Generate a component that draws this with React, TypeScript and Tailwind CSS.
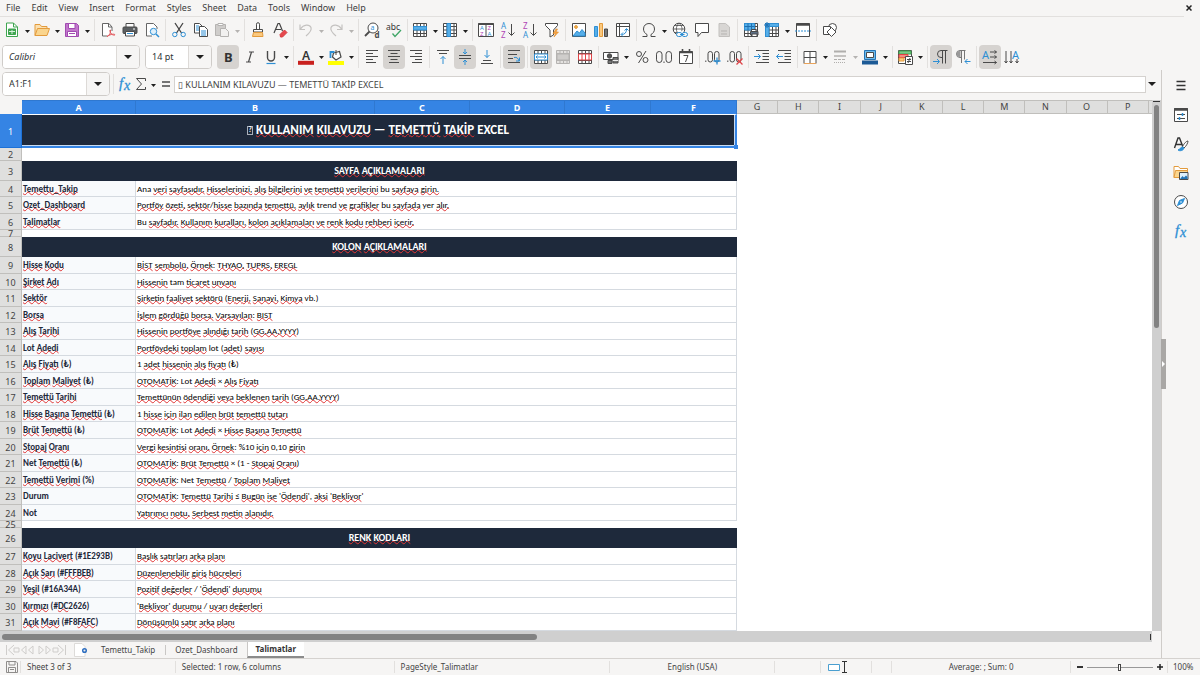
import { Fragment, type ReactNode } from "react";
import clsx from "clsx";

const BLUE = "#2e8fd4";
const INK = "#4a4a4a";

/* ---------- icons ---------- */

function Svg({ children, className }: { children: ReactNode; className?: string }) {
  return (
    <svg
      viewBox="0 0 16 16"
      className={clsx("h-4 w-4 shrink-0 overflow-visible", className)}
      fill="none"
      stroke={INK}
      aria-hidden="true"
    >
      {children}
    </svg>
  );
}

const SHEET_GRID = "M1.5 1.5h13v13h-13zM1.5 4.5h13M1.5 8h13M1.5 11.5h13M5 1.5v13M8.5 1.5v13M12 1.5v13";

const icons: Record<string, ReactNode> = {
  newDoc: (
    <Svg>
      <path d="M2.5 1h7l4 4v9.500h-11z" fill="#fff" stroke="#3fa650" />
      <path d="M9.500 1v4h4" stroke="#3fa650" />
      <path d="M4.500 7h7v5.500h-7z" fill="#3fa650" stroke="#3fa650" />
      <path d="M5 9.500h6M8 8v4" stroke="#d8f0dc" />
    </Svg>
  ),
  open: (
    <Svg>
      <path d="M1 13.500V2.500h5l1.500 2H13v2" fill="#fbe0b0" stroke="#e39b3c" />
      <path d="M1 13.500l2.500-7h12l-2.500 7z" fill="#fad58e" stroke="#e39b3c" />
    </Svg>
  ),
  save: (
    <Svg>
      <path d="M1.500 1.500h11l2 2v11h-13z" fill="#c277cc" stroke="#a14bb0" />
      <path d="M4.500 1.500h6.500v5h-6.500zM3.500 9.500h9v5h-9z" fill="#fff" stroke="#a14bb0" />
      <path d="M5 11.500h6" stroke="#a14bb0" />
    </Svg>
  ),
  pdf: (
    <Svg>
      <path d="M12 9V5L9 1.500H2.500v12.500H7" fill="#fff" stroke="#666" />
      <path d="M8.500 1.500V5H12" stroke="#666" />
      <path d="M7 14.500c2.500-1 4-4 3.500-6.500-1-.5-1 2 1 4 1 1 3 1.500 3.500.8-.3-1-4-1-8 1.700" stroke="#e2555a" />
    </Svg>
  ),
  print: (
    <Svg>
      <path d="M4 5V1.500h8V5" fill="#fff" />
      <rect x="1" y="5" width="14" height="6.500" rx="1" fill="#5c6063" />
      <path d="M3.500 9.500h9V14h-9z" fill="#fff" />
      <path d="M5 11.500h6" stroke={BLUE} />
      <path d="M11 7h2" stroke="#fff" />
    </Svg>
  ),
  preview: (
    <Svg>
      <path d="M13 7V5L9.500 1.500H2.500v12.500H8" fill="#fff" stroke="#666" />
      <circle cx="9.500" cy="9.500" r="3.200" fill="#dff0fb" stroke={BLUE} />
      <path d="M12 12l3 3" stroke={BLUE} strokeWidth="1.500" />
    </Svg>
  ),
  cut: (
    <Svg>
      <path d="M4 1l6.500 10M12 1L5.500 11" stroke="#444" strokeWidth="1.300" />
      <circle cx="3.800" cy="12.500" r="2.200" stroke={BLUE} />
      <circle cx="12.200" cy="12.500" r="2.200" stroke={BLUE} />
    </Svg>
  ),
  copy: (
    <Svg>
      <path d="M1.500 1.500h5l3 3V11h-8z" fill="#fff" />
      <path d="M6.500 4.500h5l3 3v7h-8z" fill="#fff" />
      <path d="M8 9h5M8 11h5M8 13h5M3 4h3M3 6h3M3 8h3" stroke={BLUE} />
    </Svg>
  ),
  paste: (
    <Svg>
      <path d="M1.500 2.500h10v11h-10z" fill="#cfcdcb" stroke="#b5b3b1" />
      <path d="M4 1.500h5v2H4z" fill="#fff" stroke="#b5b3b1" />
      <path d="M6.500 6.500h5l3 3v5h-8z" fill="#f2f1f0" stroke="#b5b3b1" />
    </Svg>
  ),
  clone: (
    <Svg>
      <path d="M6.500 7V2.200a1.500 1.500 0 013 0V7" fill="#fff" />
      <path d="M3.500 7.500h9v2.500h-9z" fill="#fff" />
      <path d="M3.500 10.500h9l.5 4H2.500z" fill="#fbc97f" stroke="#e39b3c" />
    </Svg>
  ),
  clear: (
    <Svg>
      <path d="M2 11L6 1.500h1.500L10.500 9M3.500 7.500h5.500" stroke="#444" strokeWidth="1.200" />
      <path d="M8 12.500l4.500-4.500 2.500 2.500-4.500 4.500H8.500z" fill="#e5484d" stroke="#d8393f" />
    </Svg>
  ),
  undo: (
    <Svg>
      <path d="M2 2.500v5h5M2.500 7c3-5 9-5 10.500-1.500 1 3-2 6-5 8.500" stroke="#c4c2c0" strokeWidth="1.200" />
    </Svg>
  ),
  redo: (
    <Svg>
      <path d="M14 2.500v5H9M13.500 7c-3-5-9-5-10.500-1.500-1 3 2 6 5 8.500" stroke="#c4c2c0" strokeWidth="1.200" />
    </Svg>
  ),
  find: (
    <Svg>
      <circle cx="9" cy="6" r="5" fill="#fff" />
      <path d="M5.500 9.500L1 14" strokeWidth="1.800" />
      <text x="6.500" y="7.500" fontSize="7" fontFamily="Noto Sans" fill={BLUE} stroke="none">a</text>
      <text x="10.500" y="15.500" fontSize="8" fontWeight="700" fontFamily="Noto Sans" fill={INK} stroke="none">d</text>
    </Svg>
  ),
  spell: (
    <Svg>
      <text x="0" y="7.500" fontSize="8.500" fontFamily="Noto Sans" fill="#333" stroke="none">abc</text>
      <path d="M6.500 11.500l2.500 3 6-6.500" stroke="#3fa667" strokeWidth="1.300" />
    </Svg>
  ),
  row: (
    <Svg>
      <path d={SHEET_GRID} fill="#fff" />
      <path d="M1.500 4.500h13V8h-13z" fill="#56aee8" stroke={BLUE} />
    </Svg>
  ),
  column: (
    <Svg>
      <path d={SHEET_GRID} fill="#fff" />
      <path d="M5 1.500h3.500v13H5z" fill="#56aee8" stroke={BLUE} />
    </Svg>
  ),
  sort: (
    <Svg>
      <path d="M.5 1.500h15v13H.5zM8 1.500v13" fill="#fff" />
      <path d="M.5 2h15" strokeWidth="2" />
      <g fontSize="6" fontFamily="Noto Sans" stroke="none">
        <text x="2" y="8" fill={BLUE}>A</text>
        <text x="2" y="14" fill="#b045b5">Z</text>
        <text x="9.500" y="8" fill="#b045b5">Z</text>
        <text x="9.500" y="14" fill={BLUE}>A</text>
      </g>
    </Svg>
  ),
  sortAsc: (
    <Svg>
      <g fontSize="8" fontFamily="Noto Sans" stroke="none">
        <text x="1" y="6.500" fill={BLUE}>A</text>
        <text x="1" y="15.500" fill="#b045b5">Z</text>
      </g>
      <path d="M11.500 2v11M8.500 10.500l3 3 3-3" />
    </Svg>
  ),
  sortDesc: (
    <Svg>
      <g fontSize="8" fontFamily="Noto Sans" stroke="none">
        <text x="1" y="6.500" fill="#b045b5">Z</text>
        <text x="1" y="15.500" fill={BLUE}>A</text>
      </g>
      <path d="M11.500 2v11M8.500 10.500l3 3 3-3" />
    </Svg>
  ),
  filter: (
    <Svg>
      <path d="M1.500 1.500h12v2l-4 4.500v5L6 15V8L1.500 3.500z" fill="#fff" />
      <path d="M12 7l-3 4.500h2.500L10 15l4.500-5H12l1.500-3z" fill="#f6a545" stroke="#e08b2a" strokeWidth=".6" />
    </Svg>
  ),
  image: (
    <Svg>
      <path d="M1.500 1.500h13v13h-13z" fill="#fff" />
      <circle cx="5" cy="5" r="1.400" fill="#f6b24a" stroke="#e39b3c" />
      <path d="M2 14l4-5 2.500 2L11 7.500l3 3.500v3z" fill="#56aee8" stroke={BLUE} />
    </Svg>
  ),
  chart: (
    <Svg>
      <path d="M1.500 4.500h3v10h-3z" fill="#56aee8" stroke={BLUE} />
      <path d="M6.500 1.500h3v13h-3z" fill="#fbc97f" stroke="#e39b3c" />
      <path d="M11.500 7h3v7.500h-3z" fill="#777" />
    </Svg>
  ),
  pivot: (
    <Svg>
      <path d="M1.500 1.500h13v13h-13zM1.500 4.500h13M4.500 1.500v13" fill="#fff" />
      <path d="M6.500 12.500c3.500 0 5-2 5-5.500M9.500 8.500l2-2 2 2M8 10.500l-2 2 2 2" stroke={BLUE} />
    </Svg>
  ),
  omega: (
    <Svg>
      <path d="M1.500 14.500h4.500v-2c-2-1-3.500-3-3.500-5.500 0-3.500 2.500-5.500 5.500-5.500s5.500 2 5.500 5.500c0 2.500-1.500 4.500-3.500 5.500v2h4.500" />
    </Svg>
  ),
  link: (
    <Svg>
      <circle cx="7" cy="7" r="5.800" fill="#fff" />
      <path d="M1.200 7h11.600M2.500 3.500h9M2.500 10.500h5M7 1.200c-3.500 3.500-3.500 8 0 11.600M7 1.200c3.500 3.500 3.500 6 2.500 8" strokeWidth=".8" />
      <rect x="4.500" y="10.500" width="5.500" height="4" rx="2" fill="#f6f5f4" stroke={BLUE} />
      <rect x="10" y="10.500" width="5.500" height="4" rx="2" fill="#f6f5f4" stroke={BLUE} />
      <path d="M8 12.500h4.500" stroke={BLUE} />
    </Svg>
  ),
  comment: (
    <Svg>
      <path d="M1.500 1.500h13v9H7.500l-3.500 4v-4H1.500z" fill="#fff" />
    </Svg>
  ),
  headerFooter: (
    <Svg>
      <path d="M3 1.500h6.500L13.500 5v9.500H3z" fill="#d8d6d4" stroke="#c2c0be" />
      <path d="M5 9h6M5 12h6" stroke="#b5b3b1" />
    </Svg>
  ),
  printArea: (
    <Svg>
      <path d={SHEET_GRID} fill="#fff" />
      <path d="M1.500 1.500h10v6.500h-10z" fill="#56aee8" stroke={BLUE} />
      <path d="M1.500 4.500h10M5 1.500V8M8.500 1.500V8" stroke="#1d6fb0" />
      <path d="M8.500 9v-1.500h4.500V9" fill="#fff" />
      <path d="M7.500 9.500h7.500v3.500H7.500z" fill="#5c6f85" />
      <path d="M9 12h5v2.500H9z" fill="#fff" />
    </Svg>
  ),
  freeze: (
    <Svg>
      <path d={SHEET_GRID} fill="#fff" />
      <path d="M1.500 1.500h13v3h-13zM1.500 1.500H5v13H1.500z" fill="#56aee8" stroke={BLUE} />
      <path d="M0 3h6M3 0v6M1 1l4 4M5 1L1 5" stroke="#2474b5" />
    </Svg>
  ),
  split: (
    <Svg>
      <path d="M1.500 1.500h13v13h-13z" fill="#fff" />
      <path d="M1.500 2.500h13" strokeWidth="2.500" />
      <path d="M0 9h16" stroke={BLUE} strokeDasharray="2 1" />
    </Svg>
  ),
  shapes: (
    <Svg>
      <circle cx="10.500" cy="5.500" r="4" fill="#fff" />
      <path d="M1.500 4.500h7v8h-7z" fill="#fff" />
      <path d="M9.500 5.500l4.500 4.500-4.500 4.500L5 10z" fill="#fff" />
    </Svg>
  ),
  bold: (
    <Svg>
      <text x="4" y="13" fontSize="13" fontWeight="700" fontFamily="Noto Sans" fill="#333" stroke="none">B</text>
    </Svg>
  ),
  italic: (
    <Svg>
      <path d="M7 3h5M4 13h5M9.500 3L6.500 13" strokeWidth="1.200" />
    </Svg>
  ),
  underline: (
    <Svg>
      <path d="M4.500 2v6.500a3.500 3.500 0 007 0V2" strokeWidth="1.400" />
      <path d="M3.500 14.500h9" stroke={BLUE} strokeWidth="1.200" />
    </Svg>
  ),
  fontColor: (
    <Svg>
      <text x="4" y="10.500" fontSize="12" fontWeight="600" fontFamily="Noto Sans" fill="#333" stroke="none">A</text>
      <path d="M0 13.800h16" stroke="#c9211e" strokeWidth="4" />
    </Svg>
  ),
  highlight: (
    <Svg>
      <path d="M5.500 4l6-1.500 1.500 5.500-5 3-3.500-3z" fill="#fff" strokeWidth="1.200" />
      <path d="M8 1v5" />
      <path d="M6.500 3H2.500V9" stroke={BLUE} strokeWidth="1.800" />
      <path d="M0 14h16" stroke="#ffff00" strokeWidth="4" />
    </Svg>
  ),
  left: (
    <Svg>
      <path d="M2 1.500h12M2 4.500h7M2 7.500h12M2 10.500h7M2 13.500h10" />
    </Svg>
  ),
  center: (
    <Svg>
      <path d="M2 1.500h12M4.500 4.500h7M2 7.500h12M4.500 10.500h7M3 13.500h10" />
    </Svg>
  ),
  right: (
    <Svg>
      <path d="M2 1.500h12M7 4.500h7M2 7.500h12M7 10.500h7M4 13.500h10" />
    </Svg>
  ),
  top: (
    <Svg>
      <path d="M2 1.500h12M4 4.500h8" />
      <path d="M8 15V7.500M5.500 10L8 7.500l2.500 2.500" stroke={BLUE} />
    </Svg>
  ),
  middle: (
    <Svg>
      <path d="M2 6.500h12M2 9.500h12" />
      <path d="M8 0v5M6 3l2 2 2-2M8 16v-5M6 13l2-2 2 2" stroke={BLUE} />
    </Svg>
  ),
  bottom: (
    <Svg>
      <path d="M4 11.500h8M2 14.500h12" />
      <path d="M8 1v7.500M5.500 6L8 8.500 10.500 6" stroke={BLUE} />
    </Svg>
  ),
  wrap: (
    <Svg>
      <path d="M2 1.500h12M2 5.500h9M2 9.500h5M2 13.500h12" />
      <path d="M8 8.500c3-.5 4 .5 5 3.500M13.500 8.500V12H10" stroke={BLUE} />
    </Svg>
  ),
  merge: (
    <Svg>
      <path d="M1.500 1.500h13v13h-13zM1.500 5h13M1.500 11h13M5 1.500V5M8.500 1.500V5M12 1.500V5M5 11v3.500M8.500 11v3.500M12 11v3.500" fill="#fff" />
      <path d="M1.500 5h13v6h-13z" fill="#fff" stroke={BLUE} />
      <path d="M3 8h10M4.500 6.500L3 8l1.500 1.500M11.500 6.500L13 8l-1.500 1.500" stroke={BLUE} />
    </Svg>
  ),
  mergeOff: (
    <Svg>
      <path d={SHEET_GRID} fill="#e4e2e0" stroke="#b5b3b1" />
      <path d="M2 5h12v6H2z" fill="#cfcdcb" stroke="#b5b3b1" />
    </Svg>
  ),
  splitCells: (
    <Svg>
      <path d={SHEET_GRID} fill="#fff" />
      <path d="M1.500 5h13v6h-13zM5 5v6M8.500 5v6M12 5v6" fill="#fff" stroke="#e04347" />
    </Svg>
  ),
  currency: (
    <Svg>
      <path d="M.5 3.500h14.500v7H.5z" fill="#fff" />
      <circle cx="6.500" cy="7" r="2.200" fill="#555" />
      <path d="M10 8.500h5v5.500h-5zM5 11.500h4v3H5z" fill="#777" />
      <path d="M10 11.500h5" stroke="#eee" />
    </Svg>
  ),
  percent: (
    <Svg>
      <circle cx="5" cy="5" r="2.500" />
      <circle cx="11.500" cy="11" r="2.500" />
      <path d="M12 2L4.500 14" />
    </Svg>
  ),
  number: (
    <Svg>
      <rect x=".5" y="2.500" width="5.500" height="11" rx="2.700" />
      <rect x="10" y="2.500" width="5.500" height="11" rx="2.700" />
      <path d="M8 12.500v1.500" />
    </Svg>
  ),
  date: (
    <Svg>
      <path d="M1.500 2.500h13v12h-13z" fill="#fff" />
      <path d="M1 3.500h14M4.500 0v4M11.500 0v4" strokeWidth="1.600" />
      <path d="M5.500 6.500H10L7.500 13" />
    </Svg>
  ),
  addDecimal: (
    <Svg>
      <path d="M.8 11.500v1.500" />
      <rect x="3" y="2.500" width="4.500" height="10.500" rx="2.200" />
      <rect x="9.500" y="2.500" width="4.500" height="10.500" rx="2.200" />
      <path d="M12 8.500v7M8.500 12h7" stroke={BLUE} strokeWidth="1.300" />
    </Svg>
  ),
  delDecimal: (
    <Svg>
      <path d="M.8 11.500v1.500" />
      <rect x="3" y="2.500" width="4.500" height="10.500" rx="2.200" />
      <rect x="9.500" y="2.500" width="4.500" height="10.500" rx="2.200" />
      <path d="M9.500 9.500l6 6M15.500 9.500l-6 6" stroke="#e04347" strokeWidth="1.300" />
    </Svg>
  ),
  indent: (
    <Svg>
      <path d="M2 1.500h13M8.500 4.500h6.500M8.500 7.500h6.500M8.500 10.500h6.500M2 13.500h13" />
      <path d="M0 7.500h6.500M4 5l2.500 2.500L4 10" stroke={BLUE} />
    </Svg>
  ),
  outdent: (
    <Svg>
      <path d="M2 1.500h13M8.500 4.500h6.500M8.500 7.500h6.500M8.500 10.500h6.500M2 13.500h13" />
      <path d="M.5 7.500H7M3 5L.5 7.500 3 10" stroke={BLUE} />
    </Svg>
  ),
  borders: (
    <Svg>
      <path d="M2 2.500h12v12H2zM8 2.500v12M2 8.500h12" fill="#fff" />
      <path d="M2 14.500h12" stroke="#e9a35a" />
    </Svg>
  ),
  lineStyle: (
    <Svg>
      <path d="M2 2.500h12" stroke="#b0aeac" strokeWidth="2" />
      <path d="M2 6.500h12M2 7.500h12" stroke="#c4c2c0" />
      <path d="M2 10.500h12" stroke="#b0aeac" strokeDasharray="3 1" />
      <path d="M2 13.500h12" stroke="#b0aeac" strokeDasharray="1 1" />
    </Svg>
  ),
  borderColor: (
    <Svg>
      <path d="M2.500 1.500h11v9h-11z" fill="#6ebbee" stroke="#2474b5" />
      <path d="M4.500 3.500h7v5h-7z" fill="#fff" />
      <path d="M0 13.500h16" stroke="#1d5a96" strokeWidth="4" />
    </Svg>
  ),
  conditional: (
    <Svg>
      <path d="M1.500 1.500h13v13h-13z" fill="#fff" />
      <path d="M2 2h12v3H2z" fill="#7bc98a" stroke="#3fa650" />
      <path d="M2 5.500h9v3H2z" fill="#f28b82" stroke="#e04347" />
      <path d="M2 9h5v3H2z" fill="#fbc97f" stroke="#e39b3c" />
      <path d="M8.500 7.500h7v8h-7z" fill="#fff" />
      <path d="M10 10.500h4M10 12.500h4M13 9l-2 5" />
    </Svg>
  ),
  ltr: (
    <Svg>
      <path d="M14.500 1.500H8a3.500 3.500 0 000 7h1.500M9.500 1.500v13M12.500 1.500v13" />
      <path d="M0 12.500h6M4 10l2.500 2.500L4 15" stroke={BLUE} />
    </Svg>
  ),
  rtl: (
    <Svg>
      <path d="M10.500 1.500H5a3.500 3.500 0 000 7h1.500V1.500M6.500 8v6M9.500 1.500v9" stroke="#777" />
      <path d="M5.500 2h-1a3 3 0 000 6h1z" fill="#999" stroke="none" />
      <path d="M15.500 12.500H10M12.500 10L10 12.500l2.500 2.500" stroke={BLUE} />
    </Svg>
  ),
  horizontalText: (
    <Svg>
      <text x="0" y="9.500" fontSize="11" fontFamily="Noto Sans" fill={BLUE} stroke="none">A</text>
      <path d="M8 3h6.500M8 8h6.500M1 13.500h13.500M12.500 1.500L14.500 3l-2 1.500M12.500 6.500l2 1.500-2 1.500M12.500 12l2 1.500-2 1.500" />
    </Svg>
  ),
  verticalText: (
    <Svg>
      <text x="8" y="9.500" fontSize="11" fontFamily="Noto Sans" fill={BLUE} stroke="none">A</text>
      <path d="M2 2v12M7 2v12M13 10v4M.5 12L2 14l1.500-2M5.500 12L7 14l1.500-2M11.500 12l1.500 2 1.500-2" />
    </Svg>
  ),
  formula: (
    <Svg>
      <g fontStyle="italic" fontFamily="Liberation Serif" fill={BLUE} stroke={BLUE} strokeWidth=".3">
        <text x="2" y="12" fontSize="15">f</text>
        <text x="7" y="14" fontSize="14">x</text>
      </g>
    </Svg>
  ),
  sum: (
    <Svg>
      <path d="M12.500 5V2.500H3.500L8.500 8l-5 5.500h9V11" />
    </Svg>
  ),
  equals: (
    <Svg>
      <path d="M4 6h8M4 10h8" strokeWidth="1.600" />
    </Svg>
  ),
  menu: (
    <Svg>
      <path d="M3.500 4.500h9M3.500 8.500h9M3.500 12.500h9" stroke="#333" strokeWidth="1.500" />
    </Svg>
  ),
  properties: (
    <Svg>
      <path d="M1.500 1.500h13v13h-13z" fill="#fff" />
      <path d="M1 2.500h14" strokeWidth="2.500" />
      <path d="M4 7.500h8M4 11.500h8" />
      <path d="M9.500 6v3M6.500 10v3" stroke={BLUE} strokeWidth="1.500" />
    </Svg>
  ),
  styles: (
    <Svg>
      <path d="M1.500 12L5 2h1.500L10 11M3 8.500h5.500" stroke="#333" strokeWidth="1.400" />
      <path d="M15 5c-2 0-5 4-5.500 6l1.500 1c2-1.500 4-5 4-7z" fill="#fff" />
      <path d="M9.500 11c-2 0-2.500 2.500-4.500 3 2 1.500 5.500.5 6-2z" fill={BLUE} stroke={BLUE} />
    </Svg>
  ),
  gallery: (
    <Svg>
      <path d="M1 12.500v-11h4.500l1.500 2h7.500v3" fill="#fff" stroke="#e39b3c" />
      <path d="M1 12.500l1.500-7h12v7z" fill="#fad58e" stroke="#e39b3c" />
      <path d="M6.500 7.500h8.500v7H6.500z" fill="#dff0fb" />
      <path d="M7 14l2.500-3 1.500 1.500 2-2 1.500 1.500v2z" fill="#2474b5" stroke="none" />
    </Svg>
  ),
  navigator: (
    <Svg>
      <circle cx="8" cy="8" r="6.500" fill="#fff" />
      <path d="M11.500 4.500L9.500 9l-5 2.500 2-5z" fill={BLUE} stroke={BLUE} />
      <circle cx="8" cy="8" r=".8" fill="#fff" stroke="none" />
    </Svg>
  ),
};

/* ---------- toolbar pieces ---------- */

function Arrow({ muted, big }: { muted?: boolean; big?: boolean }) {
  return (
    <svg viewBox="0 0 8 4" className={big ? "h-1 w-2" : "h-[3px] w-[5px]"} preserveAspectRatio="none" aria-hidden="true">
      <path d="M0 0h8L4 4z" fill={muted ? "#b5b3b1" : "#1f1f1f"} />
    </svg>
  );
}

interface Tool {
  icon: string;
  label: string;
  drop?: boolean;
  active?: boolean;
  muted?: boolean;
}

const t = (icon: string, label: string, extra: Partial<Tool> = {}): Tool => ({ icon, label, ...extra });

const standardTools: Tool[][] = [
  [t("newDoc", "New", { drop: true }), t("open", "Open", { drop: true }), t("save", "Save", { drop: true })],
  [t("pdf", "Export as PDF"), t("print", "Print"), t("preview", "Print Preview")],
  [t("cut", "Cut"), t("copy", "Copy"), t("paste", "Paste", { drop: true, muted: true })],
  [t("clone", "Clone Formatting"), t("clear", "Clear Formatting")],
  [t("undo", "Undo", { drop: true, muted: true }), t("redo", "Redo", { drop: true, muted: true })],
  [t("find", "Find and Replace"), t("spell", "Spelling")],
  [t("row", "Row", { drop: true }), t("column", "Column", { drop: true })],
  [t("sort", "Sort"), t("sortAsc", "Sort Ascending"), t("sortDesc", "Sort Descending"), t("filter", "AutoFilter")],
  [t("image", "Insert Image"), t("chart", "Insert Chart"), t("pivot", "Insert Pivot Table")],
  [
    t("omega", "Special Character", { drop: true }),
    t("link", "Insert Hyperlink"),
    t("comment", "Insert Comment"),
    t("headerFooter", "Headers and Footers", { muted: true }),
  ],
  [t("printArea", "Define Print Area"), t("freeze", "Freeze Rows and Columns", { drop: true }), t("split", "Split Window")],
  [t("shapes", "Show Draw Functions")],
];

const formatTools: Tool[][] = [
  [t("bold", "Bold", { active: true }), t("italic", "Italic"), t("underline", "Underline", { drop: true })],
  [t("fontColor", "Font Color", { drop: true }), t("highlight", "Background Color", { drop: true })],
  [t("left", "Align Left"), t("center", "Center Horizontally", { active: true }), t("right", "Align Right")],
  [t("top", "Align Top"), t("middle", "Center Vertically", { active: true }), t("bottom", "Align Bottom")],
  [t("wrap", "Wrap Text", { active: true })],
  [t("merge", "Merge and Center Cells", { active: true }), t("mergeOff", "Merge Cells", { muted: true }), t("splitCells", "Unmerge Cells")],
  [t("currency", "Format as Currency", { drop: true }), t("percent", "Format as Percent"), t("number", "Format as Number"), t("date", "Format as Date")],
  [t("addDecimal", "Add Decimal Place"), t("delDecimal", "Delete Decimal Place")],
  [t("indent", "Increase Indent"), t("outdent", "Decrease Indent")],
  [
    t("borders", "Borders", { drop: true }),
    t("lineStyle", "Border Style", { drop: true, muted: true }),
    t("borderColor", "Border Color", { drop: true }),
  ],
  [t("conditional", "Conditional", { drop: true })],
  [t("ltr", "Left-To-Right", { active: true }), t("rtl", "Right-To-Left")],
  [t("horizontalText", "Text direction from left to right", { active: true }), t("verticalText", "Text direction from top to bottom")],
];

function ToolGroups({ groups }: { groups: Tool[][] }) {
  return (
    <>
      {groups.map((group, i) => (
        <Fragment key={group[0].icon}>
          {i > 0 && (
            <span className="flex w-[5px] shrink-0 justify-center">
              <span className="h-[22px] w-px bg-[#e2e0de]" />
            </span>
          )}
          <div className="flex shrink-0">
            {group.map((tool) => (
              <Fragment key={tool.icon}>
                <button
                  type="button"
                  aria-label={tool.label}
                  aria-pressed={tool.active}
                  disabled={tool.muted}
                  className={clsx(
                    "flex h-6 items-center justify-center rounded",
                    tool.drop ? "w-5" : "w-[22px]",
                    tool.active && "bg-[#d6d3d0]"
                  )}
                >
                  {icons[tool.icon]}
                </button>
                {tool.drop && (
                  <button type="button" aria-label={`${tool.label} options`} className="flex h-6 w-2.5 items-center justify-center pt-[2px]">
                    <Arrow muted={tool.muted} />
                  </button>
                )}
              </Fragment>
            ))}
          </div>
        </Fragment>
      ))}
    </>
  );
}

function ComboBox({ label, value, className, italic }: { label: string; value: string; className: string; italic?: boolean }) {
  return (
    <div className={clsx("flex h-6 shrink-0 overflow-hidden rounded border border-[#cfccc9] bg-white", className)}>
      <input
        aria-label={label}
        defaultValue={value}
        className={clsx("min-w-0 flex-1 bg-white pl-1.5 text-[#2e3436] outline-none", italic && "italic")}
      />
      <button type="button" aria-label={`${label} list`} className="flex w-[23px] items-center justify-center border-l border-[#dddad7] bg-[#f6f5f4]">
        <Arrow big />
      </button>
    </div>
  );
}

/* ---------- sheet data ---------- */

type Row =
  | { n: number; kind: "title" | "section"; text: string }
  | { n: number; kind: "gap" | "blank" }
  | { n: number; kind: "item"; text: string; note: string };

const item = (n: number, text: string, note: string): Row => ({ n, kind: "item", text, note });

const rows: Row[] = [
  { n: 1, kind: "title", text: "KULLANIM KILAVUZU — TEMETTÜ TAKİP EXCEL" },
  { n: 2, kind: "blank" },
  { n: 3, kind: "section", text: "SAYFA AÇIKLAMALARI" },
  item(4, "Temettu_Takip", "Ana veri sayfasıdır. Hisselerinizi, alış bilgilerini ve temettü verilerini bu sayfaya girin."),
  item(5, "Ozet_Dashboard", "Portföy özeti, sektör/hisse bazında temettü, aylık trend ve grafikler bu sayfada yer alır."),
  item(6, "Talimatlar", "Bu sayfadır. Kullanım kuralları, kolon açıklamaları ve renk kodu rehberi içerir."),
  { n: 7, kind: "gap" },
  { n: 8, kind: "section", text: "KOLON AÇIKLAMALARI" },
  item(9, "Hisse Kodu", "BİST sembolü. Örnek: THYAO, TUPRS, EREGL"),
  item(10, "Şirket Adı", "Hissenin tam ticaret unvanı"),
  item(11, "Sektör", "Şirketin faaliyet sektörü (Enerji, Sanayi, Kimya vb.)"),
  item(12, "Borsa", "İşlem gördüğü borsa. Varsayılan: BIST"),
  item(13, "Alış Tarihi", "Hissenin portföye alındığı tarih (GG.AA.YYYY)"),
  item(14, "Lot Adedi", "Portföydeki toplam lot (adet) sayısı"),
  item(15, "Alış Fiyatı (₺)", "1 adet hissenin alış fiyatı (₺)"),
  item(16, "Toplam Maliyet (₺)", "OTOMATİK: Lot Adedi × Alış Fiyatı"),
  item(17, "Temettü Tarihi", "Temettünün ödendiği veya beklenen tarih (GG.AA.YYYY)"),
  item(18, "Hisse Başına Temettü (₺)", "1 hisse için ilan edilen brüt temettü tutarı"),
  item(19, "Brüt Temettü (₺)", "OTOMATİK: Lot Adedi × Hisse Başına Temettü"),
  item(20, "Stopaj Oranı", "Vergi kesintisi oranı. Örnek: %10 için 0,10 girin"),
  item(21, "Net Temettü (₺)", "OTOMATİK: Brüt Temettü × (1 - Stopaj Oranı)"),
  item(22, "Temettü Verimi (%)", "OTOMATİK: Net Temettü / Toplam Maliyet"),
  item(23, "Durum", "OTOMATİK: Temettü Tarihi ≤ Bugün ise 'Ödendi', aksi 'Bekliyor'"),
  item(24, "Not", "Yatırımcı notu. Serbest metin alanıdır."),
  { n: 25, kind: "gap" },
  { n: 26, kind: "section", text: "RENK KODLARI" },
  item(27, "Koyu Lacivert (#1E293B)", "Başlık satırları arka planı"),
  item(28, "Açık Sarı (#FFFBEB)", "Düzenlenebilir giriş hücreleri"),
  item(29, "Yeşil (#16A34A)", "Pozitif değerler / 'Ödendi' durumu"),
  item(30, "Kırmızı (#DC2626)", "'Bekliyor' durumu / uyarı değerleri"),
  item(31, "Açık Mavi (#F8FAFC)", "Dönüşümlü satır arka planı"),
];

const rowHeight: Record<Row["kind"], string> = {
  title: "h-[34px]",
  blank: "h-[13px]",
  section: "h-5",
  gap: "h-[7px]",
  item: "h-4 group-odd:h-[17px]",
};

// words that the en-US dictionary accepts, everything else gets a red wave
const knownWords = new Set(["Ana", "Bu", "bu", "trend", "yer", "tam", "vb", "Lot", "lot", "Durum", "Net", "Not", "EXCEL"]);

function Spelled({ text }: { text: string }) {
  return (
    <>
      {text.split(/([\p{L}_]{2,}[\p{L}.,]*)/u).map((part, i) => {
        const wrong = i % 2 === 1 && !knownWords.has(part.replace(/[.,]+$/, ""));
        return wrong ? (
          <span
            key={i}
            className="underline decoration-[#e03535] decoration-wavy decoration-1 -underline-offset-1 [text-decoration-skip-ink:none]"
          >
            {part}
          </span>
        ) : (
          <Fragment key={i}>{part}</Fragment>
        );
      })}
    </>
  );
}

function SheetRow({ row }: { row: Row }) {
  const h = rowHeight[row.kind];
  return (
    <tr className="group">
      <th
        scope="row"
        className={clsx(
          "border-r border-b p-0 font-normal",
          row.kind === "title" ? "border-[#1c71d8] bg-[#3584e4] font-bold text-white" : "border-[#c0bfbc] bg-[#dfdfde] text-[#444]"
        )}
      >
        <div className={clsx("-mb-px flex items-center justify-center overflow-hidden pt-px leading-3", h)}>{row.n}</div>
      </th>
      {row.kind === "title" && (
        <td colSpan={6} className="relative border-t border-r-2 border-b-2 border-[#3584e4] border-t-white bg-[#1e293b] p-0">
          <div className="flex h-[31px] items-center justify-center gap-[3px] border-r border-b border-[#c9dcf2] font-[Carlito,Lato,'Noto_Sans',sans-serif] text-[13px] font-bold text-white">
            <span className="flex h-[9px] w-1.5 items-center justify-center border border-[#aab0ba] text-[7px]">?</span>
            <span>
              <Spelled text={row.text} />
            </span>
          </div>
          <span className="absolute -right-[3px] -bottom-[3px] h-1 w-1 bg-[#3584e4]" />
        </td>
      )}
      {row.kind === "section" && (
        <td
          colSpan={6}
          className="bg-[#1e293b] p-0 text-center font-[Carlito,Lato,'Noto_Sans',sans-serif] text-[10px] leading-4 font-bold text-white"
        >
          <Spelled text={row.text} />
        </td>
      )}
      {(row.kind === "gap" || row.kind === "blank") && <td colSpan={6} className="p-0" />}
      {row.kind === "item" && (
        <>
          <td className="border-r border-b border-[#d5dae0] bg-[#f8fafc] p-0 pl-px font-[Carlito,Lato,'Noto_Sans',sans-serif] leading-3 font-bold whitespace-nowrap text-[#1e293b]">
            <Spelled text={row.text} />
          </td>
          <td
            colSpan={5}
            className="border-r border-b border-[#d5dae0] p-0 pl-px font-[Carlito,Lato,'Noto_Sans',sans-serif] leading-3 whitespace-nowrap text-black"
          >
            <Spelled text={row.note} />
          </td>
        </>
      )}
      <td colSpan={11} className="p-0" />
    </tr>
  );
}

const usedColumns = ["A", "B", "C", "D", "E", "F"];
const freeColumns = ["G", "H", "I", "J", "K", "L", "M", "N", "O", "P"];

function Sheet() {
  return (
    <table className="w-full table-fixed border-separate border-spacing-0 bg-white">
      <colgroup>
        <col className="w-[22px]" />
        <col className="w-[114px]" />
        <col className="w-[239px]" />
        <col className="w-[95px]" />
        <col className="w-[95px]" />
        <col className="w-[86px]" />
        <col className="w-[86px]" />
        {freeColumns.map((c) => (
          <col key={c} />
        ))}
        <col className="w-[3px]" />
      </colgroup>
      <thead>
        <tr className="h-3.5 leading-3">
          <td className="bg-[#f6f5f4] p-0" />
          {usedColumns.map((c) => (
            <th key={c} scope="col" className="border-t border-r border-[#2f78d0] bg-[#3584e4] p-0 font-bold text-white">
              {c}
            </th>
          ))}
          {freeColumns.map((c) => (
            <th key={c} scope="col" className="border-t border-r border-b border-[#c0bfbc] bg-[#dfdfde] p-0 font-normal text-[#444]">
              {c}
            </th>
          ))}
          <td className="border-t border-b border-[#c0bfbc] bg-[#dfdfde] p-0" />
        </tr>
      </thead>
      <tbody>
        {rows.map((row) => (
          <SheetRow key={row.n} row={row} />
        ))}
      </tbody>
    </table>
  );
}

/* ---------- window parts ---------- */

const menus = ["File", "Edit", "View", "Insert", "Format", "Styles", "Sheet", "Data", "Tools", "Window", "Help"];

function MenuBar() {
  return (
    <nav className="mr-4 flex h-[17px] items-center gap-px border-b border-[#e2e0de] pl-px text-[#3d3d3d]">
      {menus.map((m) => (
        <button key={m} type="button" className="px-[5px]">
          {m}
        </button>
      ))}
      <button type="button" aria-label="Close document" className="-mr-2 ml-auto">
        <svg viewBox="0 0 6 6" className="h-1.5 w-1.5" aria-hidden="true">
          <path d="M.5.5l5 5M5.500.5l-5 5" stroke="#222" strokeWidth="1.500" />
        </svg>
      </button>
    </nav>
  );
}

function FormulaBar() {
  return (
    <div className="flex h-[30px] items-center pr-[5px] pb-[2px] pl-[2px]">
      <ComboBox label="Name Box" value="A1:F1" className="w-[108px]" />
      <span className="ml-[3px] h-5 w-px bg-[#e2e0de]" />
      <button type="button" aria-label="Function Wizard" className="ml-0.5 flex w-[18px] justify-center">{icons.formula}</button>
      <button type="button" aria-label="Select Function" className="flex w-3.5 justify-center">{icons.sum}</button>
      <button type="button" aria-label="Select Function options" className="flex w-2.5 justify-center pt-[2px]"><Arrow /></button>
      <button type="button" aria-label="Formula" className="flex w-4 justify-center">{icons.equals}</button>
      <input
        aria-label="Input line"
        defaultValue="▯ KULLANIM KILAVUZU — TEMETTÜ TAKİP EXCEL"
        className="h-[17px] min-w-0 flex-1 border border-[#d5d2cf] bg-white pl-[3px] text-[#444] outline-none"
      />
      <button type="button" aria-label="Expand Formula Bar" className="ml-[2px] flex w-2 justify-center"><Arrow big /></button>
    </div>
  );
}

function SheetTabs() {
  return (
    <div className="flex h-4 items-center text-[8px] text-[#444]">
      <svg viewBox="0 0 60 12" className="ml-1.5 h-3 w-[60px]" fill="none" stroke="#cfcdcb" aria-hidden="true">
        <path d="M.5 1v10M8 1L2.500 6 8 11M8 4v4h5V4zM20 2l-4.500 4 4.500 4zM27 2l-4.500 4 4.500 4zM33 2l4.500 4-4.500 4zM40 2l4.500 4-4.500 4zM47 4v4h5V4zM52 1l5.500 5L52 11M59.500 1v10" />
      </svg>
      <button type="button" aria-label="Insert Sheet" className="ml-2">
        <svg viewBox="0 0 14 14" className="h-3.5 w-3.5" fill="none" aria-hidden="true">
          <path d="M.5.5H8l3 3V13.500H.5z" fill="#fff" stroke="#dddbd9" />
          <circle cx="10.500" cy="7.500" r="1.800" stroke="#2f6fc0" strokeWidth="1.500" />
        </svg>
      </button>
      <button type="button" className="ml-[3px] px-2.5">Temettu_Takip</button>
      <span className="h-2.5 w-px bg-[#c9c7c5]" />
      <button type="button" className="px-[9px]">Ozet_Dashboard</button>
      <button type="button" className="h-full border-b-2 border-l border-[#8b8b8b] border-l-[#c9c7c5] bg-white px-2 font-bold text-[#333]">
        Talimatlar
      </button>
    </div>
  );
}

function StatusBar() {
  const cell = "flex h-3 items-center border-r border-[#e2e0de] pl-1.5";
  return (
    <footer className="grid h-[17px] grid-cols-[21px_155fr_219fr_216fr_165fr_46fr_31px_20px_20px_179fr_97px_32px] items-center border-t border-[#d5d2cf] text-[8px] text-[#444]">
      <div className={cell}>
        <svg viewBox="0 0 12 12" className="h-3 w-3 shrink-0" fill="none" stroke="#8f8d8b" aria-hidden="true">
          <path d="M.5.5h9.500l1.500 1.500v9.500H.5zM3 .5v3.500h6V.5M2.500 11.500v-5h7v5M4 8.500h4" />
        </svg>
      </div>
      <div className={cell}>Sheet 3 of 3</div>
      <div className={cell}>Selected: 1 row, 6 columns</div>
      <div className={cell}>PageStyle_Talimatlar</div>
      <div className="flex h-3 items-center justify-center border-r border-[#e2e0de]">English (USA)</div>
      <div className={cell} />
      <div className="flex h-3 items-center pl-[7px]">
        <svg viewBox="0 0 20 12" className="h-3 w-5" fill="none" aria-hidden="true">
          <path d="M.5 3.500h11v6H.5z" fill="#fff" stroke="#4a9fd0" />
          <path d="M14 .5h5M14 11.500h5M16.500.5v11" stroke="#333" />
        </svg>
      </div>
      <div className={cell} />
      <div className={cell} />
      <div className="flex h-3 items-center justify-center border-r border-[#e2e0de]">Average: ; Sum: 0</div>
      <div className={clsx(cell, "gap-1")}>
        <button type="button" aria-label="Zoom out" className="h-[2px] w-1.5 shrink-0 bg-[#333]" />
        <input
          type="range"
          aria-label="Zoom"
          defaultValue={49}
          className="h-2 min-w-0 flex-1 appearance-none bg-[linear-gradient(#999,#999)] bg-[length:100%_1px] bg-center bg-no-repeat [&::-webkit-slider-thumb]:h-[7px] [&::-webkit-slider-thumb]:w-[3px] [&::-webkit-slider-thumb]:appearance-none [&::-webkit-slider-thumb]:border [&::-webkit-slider-thumb]:border-[#444] [&::-webkit-slider-thumb]:bg-white"
        />
        <button type="button" aria-label="Zoom in" className="mr-1 shrink-0">
          <svg viewBox="0 0 6 6" className="h-1.5 w-1.5" aria-hidden="true">
            <path d="M3 0v6M0 3h6" stroke="#222" strokeWidth="1.500" />
          </svg>
        </button>
      </div>
      <div className="pl-[5px]">100%</div>
    </footer>
  );
}

function Sidebar() {
  return (
    <aside className="relative flex w-[39px] shrink-0 flex-col items-center border-l border-[#cfccc9]">
      <button type="button" aria-label="Sidebar settings" className="flex h-[30px] items-center pb-px">
        {icons.menu}
      </button>
      {["properties", "styles", "gallery", "navigator", "formula"].map((name) => (
        <button key={name} type="button" aria-label={name} className="flex h-[29px] items-center">
          {icons[name]}
        </button>
      ))}
      <button
        type="button"
        aria-label="Hide sidebar"
        className="absolute top-[269px] -left-px flex h-[50px] w-[5px] items-center justify-center bg-[#a9a7a5]"
      >
        <svg viewBox="0 0 3 6" className="h-1.5 w-[3px]" aria-hidden="true">
          <path d="M0 0l3 3-3 3z" fill="#fff" />
        </svg>
      </button>
    </aside>
  );
}

export default function App() {
  return (
    <div className="flex min-h-screen flex-col overflow-hidden bg-[#f6f5f4] font-['Noto_Sans',sans-serif] text-[9px] leading-3">
      <MenuBar />

      {/* Standard toolbar */}
      <div className="flex h-[26px] items-center pl-[2px]">
        <ToolGroups groups={standardTools} />
      </div>

      {/* Formatting toolbar */}
      <div className="flex h-[27px] items-center pl-[2px]">
        <ComboBox label="Font Name" value="Calibri" italic className="mr-[5px] w-[138px]" />
        <ComboBox label="Font Size" value="14 pt" className="mr-[5px] w-[67px]" />
        <ToolGroups groups={formatTools} />
      </div>

      <div className="flex flex-1">
        <main className="flex min-w-0 flex-1 flex-col">
          <FormulaBar />
          <div className="flex">
            <div className="min-w-0 flex-1">
              <Sheet />
            </div>
            {/* Vertical scrollbar */}
            <div className="flex w-[9px] flex-col items-center bg-[#cfcfcf]">
              <span className="mt-px mb-[3px] h-px w-[7px] bg-[#333]" />
              <span className="h-[42%] w-[5px] rounded-full bg-[#828282]" />
            </div>
          </div>
          {/* Horizontal scrollbar */}
          <div className="mr-[9px] flex h-[11px] items-center bg-[#cfcfcf] pl-[2px]">
            <span className="h-1.5 w-[535px] rounded-full bg-[#828282]" />
            <span className="mr-px ml-auto h-1.5 w-px bg-[#333]" />
          </div>
          <SheetTabs />
        </main>
        <Sidebar />
      </div>

      <StatusBar />
    </div>
  );
}
